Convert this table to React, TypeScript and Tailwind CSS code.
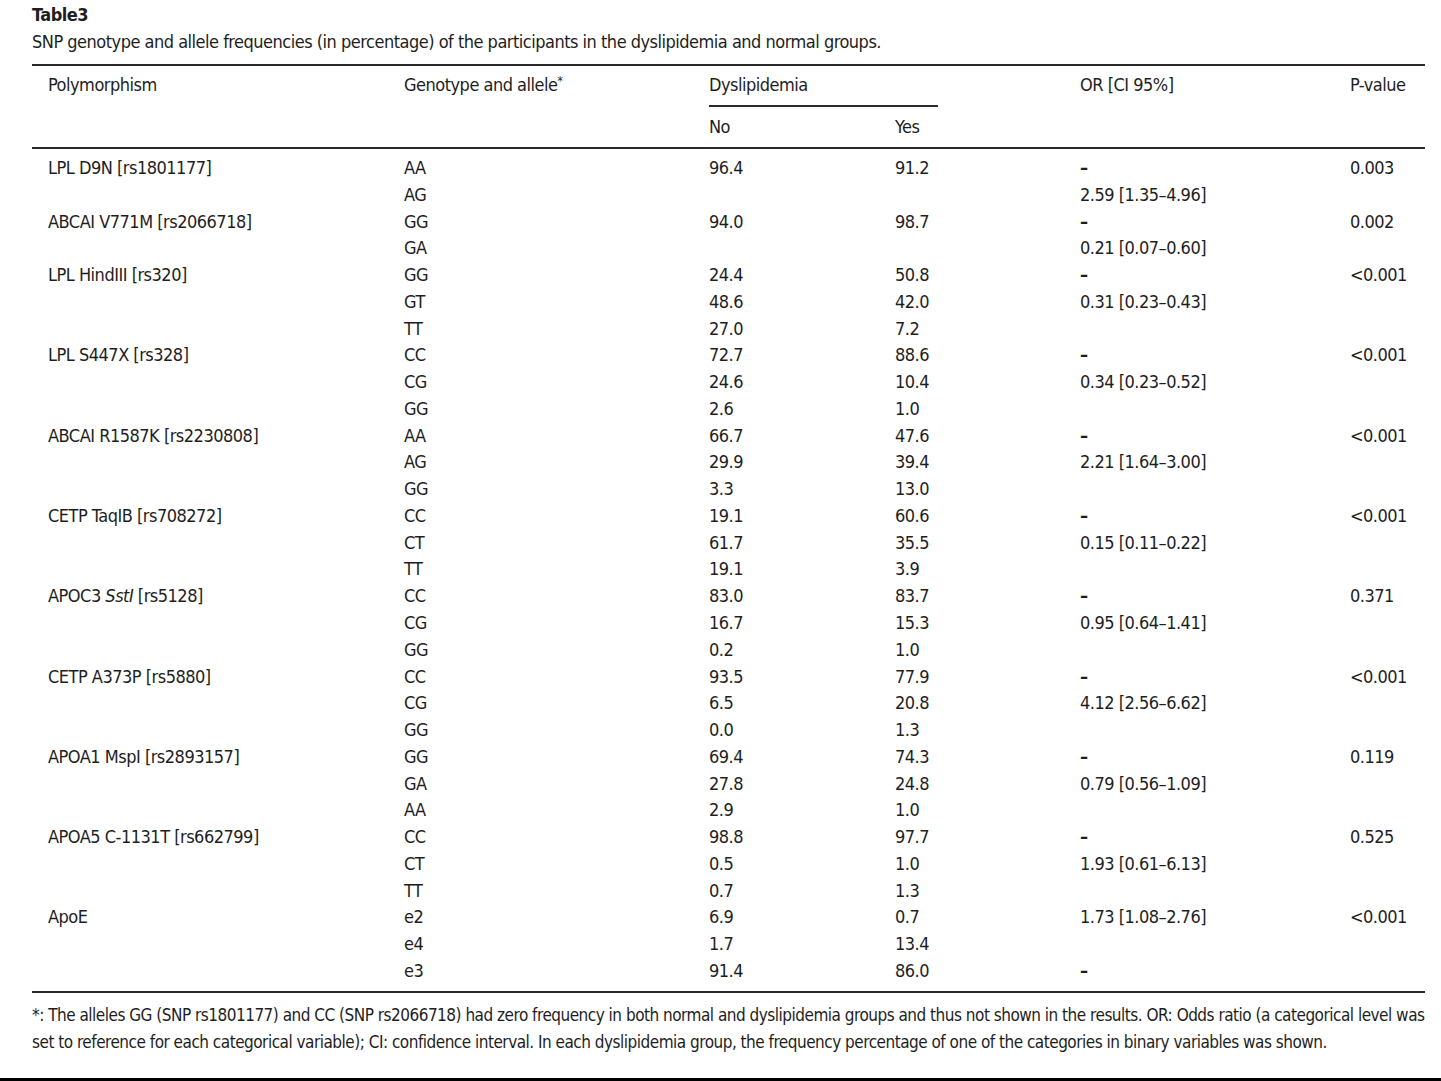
type Row = {
  label?: React.ReactNode
  g: string
  no?: string
  yes?: string
  or?: string
  p?: string
}

const rows: Row[] = [
  { label: 'LPL D9N [rs1801177]', g: 'AA', no: '96.4', yes: '91.2', or: '–', p: '0.003' },
  { g: 'AG', or: '2.59 [1.35–4.96]' },
  { label: 'ABCAI V771M [rs2066718]', g: 'GG', no: '94.0', yes: '98.7', or: '–', p: '0.002' },
  { g: 'GA', or: '0.21 [0.07–0.60]' },
  { label: 'LPL HindIII [rs320]', g: 'GG', no: '24.4', yes: '50.8', or: '–', p: '<0.001' },
  { g: 'GT', no: '48.6', yes: '42.0', or: '0.31 [0.23–0.43]' },
  { g: 'TT', no: '27.0', yes: '7.2' },
  { label: 'LPL S447X [rs328]', g: 'CC', no: '72.7', yes: '88.6', or: '–', p: '<0.001' },
  { g: 'CG', no: '24.6', yes: '10.4', or: '0.34 [0.23–0.52]' },
  { g: 'GG', no: '2.6', yes: '1.0' },
  { label: 'ABCAI R1587K [rs2230808]', g: 'AA', no: '66.7', yes: '47.6', or: '–', p: '<0.001' },
  { g: 'AG', no: '29.9', yes: '39.4', or: '2.21 [1.64–3.00]' },
  { g: 'GG', no: '3.3', yes: '13.0' },
  { label: 'CETP TaqIB [rs708272]', g: 'CC', no: '19.1', yes: '60.6', or: '–', p: '<0.001' },
  { g: 'CT', no: '61.7', yes: '35.5', or: '0.15 [0.11–0.22]' },
  { g: 'TT', no: '19.1', yes: '3.9' },
  {
    label: (
      <>
        APOC3 <i>SstI</i> [rs5128]
      </>
    ),
    g: 'CC',
    no: '83.0',
    yes: '83.7',
    or: '–',
    p: '0.371',
  },
  { g: 'CG', no: '16.7', yes: '15.3', or: '0.95 [0.64–1.41]' },
  { g: 'GG', no: '0.2', yes: '1.0' },
  { label: 'CETP A373P [rs5880]', g: 'CC', no: '93.5', yes: '77.9', or: '–', p: '<0.001' },
  { g: 'CG', no: '6.5', yes: '20.8', or: '4.12 [2.56–6.62]' },
  { g: 'GG', no: '0.0', yes: '1.3' },
  { label: 'APOA1 MspI [rs2893157]', g: 'GG', no: '69.4', yes: '74.3', or: '–', p: '0.119' },
  { g: 'GA', no: '27.8', yes: '24.8', or: '0.79 [0.56–1.09]' },
  { g: 'AA', no: '2.9', yes: '1.0' },
  { label: 'APOA5 C-1131T [rs662799]', g: 'CC', no: '98.8', yes: '97.7', or: '–', p: '0.525' },
  { g: 'CT', no: '0.5', yes: '1.0', or: '1.93 [0.61–6.13]' },
  { g: 'TT', no: '0.7', yes: '1.3' },
  { label: 'ApoE', g: 'e2', no: '6.9', yes: '0.7', or: '1.73 [1.08–2.76]', p: '<0.001' },
  { g: 'e4', no: '1.7', yes: '13.4' },
  { g: 'e3', no: '91.4', yes: '86.0', or: '–' },
]

const cols = 'grid grid-cols-[356px_305px_186px_185px_270px_91px]'

export default function App() {
  return (
    <div
      className="flex h-[1081px] w-[1441px] flex-col bg-white text-[18px] tracking-[-0.5px] text-[#1e1e1e]"
      style={{ fontFamily: '"Liberation Sans Narrow", "DejaVu Sans Condensed", "Liberation Sans", sans-serif' }}
    >
      <div className="px-[32px] pt-[1px] leading-[27px]">
        <div className="font-bold">Table3</div>
        <div>
          SNP genotype and allele frequencies (in percentage) of the participants in the dyslipidemia and normal
          groups.
        </div>
      </div>

      <div className="ml-[32px] mt-[9px] w-[1393px]">
        {/* header */}
        <div className={`${cols} border-y-2 border-[#2a2a2a] pb-[7px] pt-[6px] leading-[26px]`}>
          <div className="pl-4">Polymorphism</div>
          <div className="pl-4">
            Genotype and allele<sup className="text-[12px]">*</sup>
          </div>
          <div className="col-span-2 pl-4">
            <div className="w-[229px] border-b-2 border-[#2a2a2a] pb-[7px]">Dyslipidemia</div>
            <div className="mt-[7px] flex">
              <span className="w-[186px]">No</span>
              <span>Yes</span>
            </div>
          </div>
          <div className="pl-4">OR [CI 95%]</div>
          <div className="pl-4">P-value</div>
        </div>

        {/* body */}
        <div className="border-b-2 border-[#2a2a2a] pb-[6px] pt-[6px]">
          {rows.map((r, i) => (
            <div key={i} className={`${cols} leading-[26.77px]`}>
              <div className="pl-4">{r.label}</div>
              <div className="pl-4">{r.g}</div>
              <div className="pl-4">{r.no}</div>
              <div className="pl-4">{r.yes}</div>
              <div className={r.or === '–' ? 'pl-4 font-bold' : 'pl-4'}>{r.or}</div>
              <div className="pl-4">{r.p}</div>
            </div>
          ))}
        </div>
      </div>

      <div className="mt-[9px] px-[32px] text-[17px] leading-[27px] tracking-[-0.5px]">
        <div className="whitespace-nowrap">
          *: The alleles GG (SNP rs1801177) and CC (SNP rs2066718) had zero frequency in both normal and dyslipidemia
          groups and thus not shown in the results. OR: Odds ratio (a categorical level was
        </div>
        <div className="whitespace-nowrap">
          set to reference for each categorical variable); CI: confidence interval. In each dyslipidemia group, the
          frequency percentage of one of the categories in binary variables was shown.
        </div>
      </div>

      <div className="mt-auto h-[3px] bg-black" />
    </div>
  )
}
